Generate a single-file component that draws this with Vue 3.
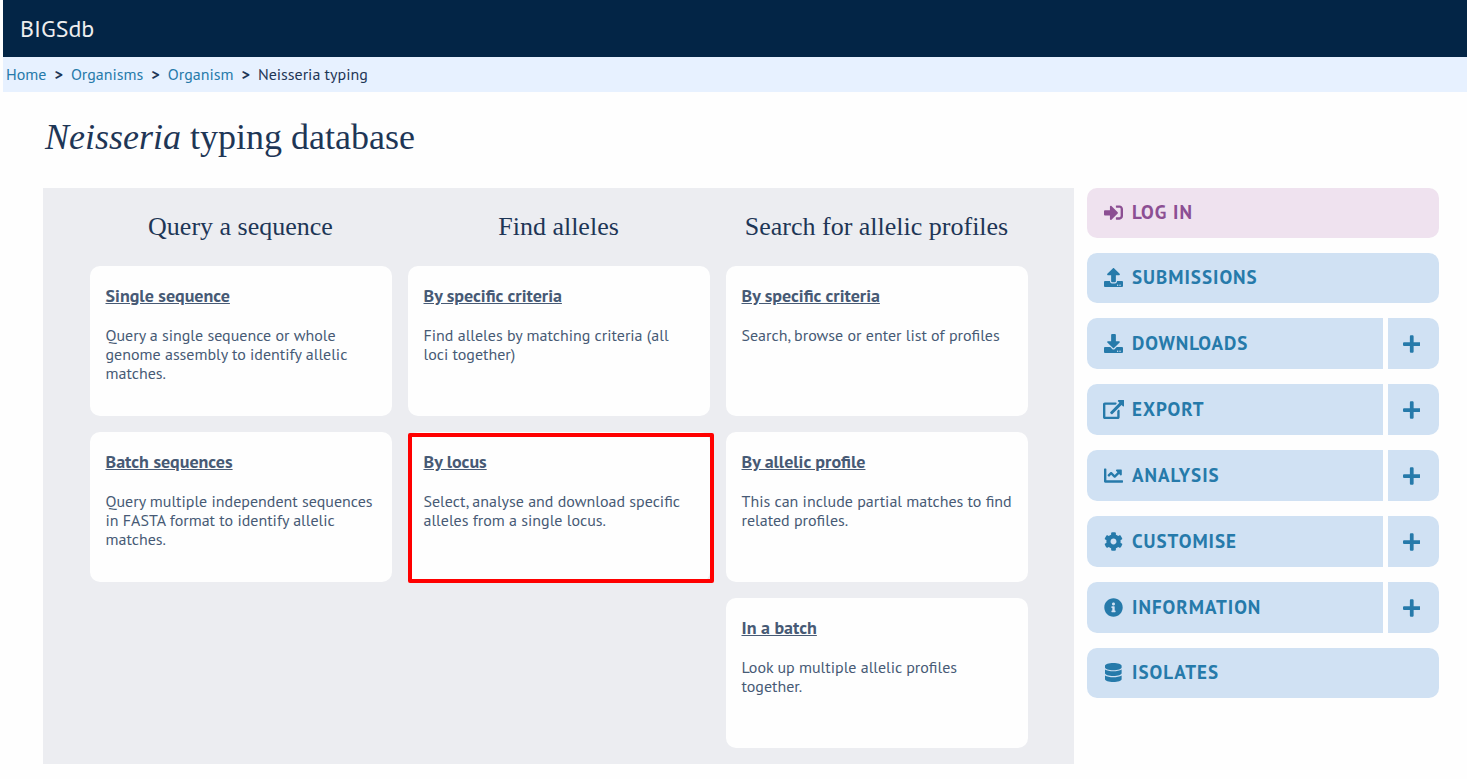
<script setup>
const crumbs = ['Home', 'Organisms', 'Organism']

const columns = [
  {
    title: 'Query a sequence',
    cards: [
      { title: 'Single sequence', text: 'Query a single sequence or whole genome assembly to identify allelic matches.' },
      { title: 'Batch sequences', text: 'Query multiple independent sequences in FASTA format to identify allelic matches.' }
    ]
  },
  {
    title: 'Find alleles',
    cards: [
      { title: 'By specific criteria', text: 'Find alleles by matching criteria (all loci together)' },
      { title: 'By locus', text: 'Select, analyse and download specific alleles from a single locus.', marked: true }
    ]
  },
  {
    title: 'Search for allelic profiles',
    cards: [
      { title: 'By specific criteria', text: 'Search, browse or enter list of profiles' },
      { title: 'By allelic profile', text: 'This can include partial matches to find related profiles.' },
      { title: 'In a batch', text: 'Look up multiple allelic profiles together.' }
    ]
  }
]

const dots = 'm-124 88c0-11-9-20-20-20s-20 9-20 20 9 20 20 20 20-9 20-20zm64 0c0-11-9-20-20-20s-20 9-20 20 9 20 20 20 20-9 20-20z'

const actions = [
  { label: 'Log in', kind: 'login', w: 512, d: 'M416 448h-84c-6.6 0-12-5.4-12-12v-40c0-6.6 5.4-12 12-12h84c17.7 0 32-14.3 32-32V160c0-17.7-14.3-32-32-32h-84c-6.6 0-12-5.4-12-12V76c0-6.6 5.4-12 12-12h84c53 0 96 43 96 96v192c0 53-43 96-96 96zm-47-201L201 79c-15-15-41-4.5-41 17v96H24c-13.3 0-24 10.7-24 24v96c0 13.3 10.7 24 24 24h136v96c0 21.5 26 32 41 17l168-168c9.3-9.4 9.3-24.6 0-34z' },
  { label: 'Submissions', w: 512, d: 'M296 384h-80c-13.3 0-24-10.7-24-24V192h-87.7c-17.8 0-26.7-21.5-14.1-34.1L242.3 5.7c7.5-7.5 19.8-7.5 27.3 0l152.2 152.2c12.6 12.6 3.7 34.1-14.1 34.1H320v168c0 13.3-10.7 24-24 24zm216-8v112c0 13.3-10.7 24-24 24H24c-13.3 0-24-10.7-24-24V376c0-13.3 10.7-24 24-24h136v8c0 30.9 25.1 56 56 56h80c30.9 0 56-25.1 56-56v-8h136c13.3 0 24 10.7 24 24z' + dots },
  { label: 'Downloads', more: true, w: 512, d: 'M216 0h80c13.3 0 24 10.7 24 24v168h87.7c17.8 0 26.7 21.5 14.1 34.1L269.7 378.3c-7.5 7.5-19.8 7.5-27.3 0L90.1 226.1c-12.6-12.6-3.7-34.1 14.1-34.1H192V24c0-13.3 10.7-24 24-24zm296 376v112c0 13.3-10.7 24-24 24H24c-13.3 0-24-10.7-24-24V376c0-13.3 10.7-24 24-24h146.7l49 49c20.1 20.1 52.5 20.1 72.6 0l49-49H488c13.3 0 24 10.7 24 24z' + dots },
  { label: 'Export', more: true, w: 576, d: 'M576 24v127.984c0 21.461-25.96 31.98-40.971 16.971l-35.707-35.709-243.523 243.523c-9.373 9.373-24.568 9.373-33.941 0l-22.627-22.627c-9.373-9.373-9.373-24.569 0-33.941L442.756 76.676l-35.703-35.705C391.982 25.9 402.656 0 424.024 0H552c13.255 0 24 10.745 24 24zM407.029 270.794l-16 16A23.999 23.999 0 0 0 384 303.765V448H64V128h264a24.003 24.003 0 0 0 16.97-7.029l16-16C376.089 89.851 365.381 64 344 64H48C21.49 64 0 85.49 0 112v352c0 26.51 21.49 48 48 48h352c26.51 0 48-21.49 48-48V287.764c0-21.382-25.852-32.09-40.971-16.97z' },
  { label: 'Analysis', more: true, w: 512, d: 'M496 384H64V80c0-8.84-7.16-16-16-16H16C7.16 64 0 71.16 0 80v336c0 17.67 14.33 32 32 32h464c8.84 0 16-7.16 16-16v-32c0-8.84-7.16-16-16-16zM464 96H345.94c-21.38 0-32.09 25.85-16.97 40.97l32.4 32.4L288 242.75l-73.37-73.37c-12.5-12.5-32.76-12.5-45.25 0l-68.69 68.69c-6.25 6.25-6.25 16.38 0 22.63l22.62 22.62c6.25 6.25 16.38 6.25 22.63 0L192 237.25l73.37 73.37c12.5 12.5 32.76 12.5 45.25 0l96-96 32.4 32.4c15.12 15.12 40.97 4.41 40.97-16.97V112c.01-8.84-7.15-16-15.99-16z' },
  { label: 'Customise', more: true, w: 512, d: 'M487.4 315.7l-42.6-24.6c4.3-23.2 4.3-47 0-70.2l42.6-24.6c4.9-2.8 7.1-8.6 5.5-14-11.1-35.6-30-67.8-54.7-94.6-3.8-4.1-10-5.1-14.8-2.3L380.8 110c-17.9-15.4-38.5-27.3-60.8-35.1V25.8c0-5.6-3.9-10.5-9.4-11.7-36.7-8.2-74.3-7.8-109.2 0-5.5 1.2-9.4 6.1-9.4 11.7V75c-22.2 7.9-42.8 19.8-60.8 35.1L88.7 85.5c-4.9-2.8-11-1.9-14.8 2.3-24.7 26.7-43.6 58.9-54.7 94.6-1.7 5.4.6 11.2 5.5 14L67.3 221c-4.3 23.2-4.3 47 0 70.2l-42.6 24.6c-4.9 2.8-7.1 8.6-5.5 14 11.1 35.6 30 67.8 54.7 94.6 3.8 4.1 10 5.1 14.8 2.3l42.6-24.6c17.9 15.4 38.5 27.3 60.8 35.1v49.2c0 5.6 3.9 10.5 9.4 11.7 36.7 8.2 74.3 7.8 109.2 0 5.5-1.2 9.4-6.1 9.4-11.7v-49.2c22.2-7.9 42.8-19.8 60.8-35.1l42.6 24.6c4.9 2.8 11 1.9 14.8-2.3 24.7-26.7 43.6-58.9 54.7-94.6 1.5-5.5-.7-11.3-5.6-14.1zM256 336c-44.1 0-80-35.9-80-80s35.9-80 80-80 80 35.9 80 80-35.9 80-80 80z' },
  { label: 'Information', more: true, w: 512, d: 'M256 8C119.043 8 8 119.083 8 256c0 136.997 111.043 248 248 248s248-111.003 248-248C504 119.083 392.957 8 256 8zm0 110c23.196 0 42 18.804 42 42s-18.804 42-42 42-42-18.804-42-42 18.804-42 42-42zm56 254c0 6.627-5.373 12-12 12h-88c-6.627 0-12-5.373-12-12v-24c0-6.627 5.373-12 12-12h12v-64h-12c-6.627 0-12-5.373-12-12v-24c0-6.627 5.373-12 12-12h64c6.627 0 12 5.373 12 12v100h12c6.627 0 12 5.373 12 12v24z' },
  { label: 'Isolates', w: 448, d: 'M448 73.143v45.714C448 159.143 347.667 192 224 192S0 159.143 0 118.857V73.143C0 32.857 100.333 0 224 0s224 32.857 224 73.143zM448 176v102.857C448 319.143 347.667 352 224 352S0 319.143 0 278.857V176c48.125 33.143 136.208 48.572 224 48.572S399.874 209.143 448 176zm0 160v102.857C448 479.143 347.667 512 224 512S0 479.143 0 438.857V336c48.125 33.143 136.208 48.572 224 48.572S399.874 369.143 448 336z' }
]
</script>

<template>
  <div class="page">
    <header class="topbar">BIGSdb</header>
    <nav class="crumbs" aria-label="Breadcrumb">
      <template v-for="crumb in crumbs" :key="crumb">
        <a href="#">{{ crumb }}</a>
        <span class="sep">&gt;</span>
      </template>
      <span>Neisseria typing</span>
    </nav>

    <h1 class="title"><em>Neisseria</em> typing database</h1>

    <div class="layout">
      <main class="panel">
        <section v-for="column in columns" :key="column.title" class="column">
          <h2>{{ column.title }}</h2>
          <article v-for="card in column.cards" :key="card.title" class="card" :class="{ marked: card.marked }">
            <a href="#">{{ card.title }}</a>
            <p>{{ card.text }}</p>
          </article>
        </section>
      </main>

      <aside class="side">
        <div v-for="action in actions" :key="action.label" class="row" :class="[action.kind, { split: action.more }]">
          <a href="#" class="action">
            <span class="icon">
              <svg :viewBox="`0 0 ${action.w} 512`" aria-hidden="true"><path :d="action.d" /></svg>
            </span>
            <span>{{ action.label }}</span>
          </a>
          <button v-if="action.more" type="button" class="more" :aria-label="`More: ${action.label}`">
            <svg viewBox="0 0 448 512" aria-hidden="true">
              <path d="M416 208H272V64c0-17.67-14.33-32-32-32h-32c-17.67 0-32 14.33-32 32v144H32c-17.67 0-32 14.33-32 32v32c0 17.67 14.33 32 32 32h144v144c0 17.67 14.33 32 32 32h32c17.67 0 32-14.33 32-32V304h144c17.67 0 32-14.33 32-32v-32c0-17.67-14.33-32-32-32z" />
            </svg>
          </button>
        </div>
      </aside>
    </div>
  </div>
</template>

<style>
body {
  background: #fefefe;
}
</style>

<style scoped>
.page {
  padding-left: 3px;
  color: #1e3656;
  font-family: "PT Sans", "Noto Sans", sans-serif;
  font-size: 16px;
  line-height: 19px;
}

.topbar {
  padding: 16px 17px;
  background: #032546;
  color: #eeeeee;
  font-size: 24px;
  line-height: 25px;
}

.crumbs {
  display: flex;
  gap: 8px;
  padding: 8px 3px;
  background: #e7f1ff;
}

.crumbs a {
  color: #267aaa;
  text-decoration: none;
}

.sep {
  font-weight: 700;
}

.title {
  margin: 23px 42px 29px;
  font-family: "Liberation Serif", serif;
  font-size: 36px;
  font-weight: 400;
  line-height: 44px;
}

.layout {
  display: flex;
  align-items: flex-start;
  gap: 13px;
  padding: 0 28px 15px 40px;
}

.panel {
  flex: 1;
  display: flex;
  justify-content: center;
  gap: 16px;
  padding: 0 16px 16px;
  background: #ecedf1;
}

.column {
  width: 302px;
  display: flex;
  flex-direction: column;
  gap: 16px;
}

.column h2 {
  margin: 24px 0 8px;
  font-family: "Liberation Serif", serif;
  font-size: 26px;
  font-weight: 400;
  line-height: 30px;
  text-align: center;
}

.card {
  position: relative;
  box-sizing: border-box;
  min-height: 150px;
  padding: 19px 14px 19px 16px;
  border-radius: 10px;
  background: #fefefe;
  color: #475a75;
}

.card a {
  color: inherit;
  font-size: 18px;
  font-weight: 700;
  line-height: 22px;
}

.card p {
  margin: 19px 0 0;
}

.marked::after {
  content: "";
  position: absolute;
  inset: 1px -4px -1px 0;
  border: 4px solid #ff0000;
  border-radius: 2px;
}

.side {
  width: 352px;
}

.row {
  display: flex;
  gap: 5px;
  margin-bottom: 15px;
  color: #267aaa;
}

.action,
.more {
  background: #d0e1f3;
  color: inherit;
}

.action {
  flex: 1;
  display: flex;
  align-items: center;
  gap: 6px;
  padding: 12px 14px 14px;
  border-radius: 10px;
  font-size: 19px;
  font-weight: 700;
  line-height: 24px;
  letter-spacing: 1px;
  text-transform: uppercase;
  text-decoration: none;
}

.login {
  color: #8c4f93;
}

.login .action {
  background: #efe2ef;
}

.split .action {
  padding-top: 13px;
  border-radius: 10px 0 0 10px;
}

.more {
  width: 51px;
  padding: 0 4px 0 0;
  border: 0;
  border-radius: 0 10px 10px 0;
}

.icon {
  width: 25px;
  display: flex;
  justify-content: center;
}

svg {
  height: 19px;
  fill: currentColor;
}

.more svg {
  display: block;
  margin: 0 auto;
  height: 20px;
}
</style>
